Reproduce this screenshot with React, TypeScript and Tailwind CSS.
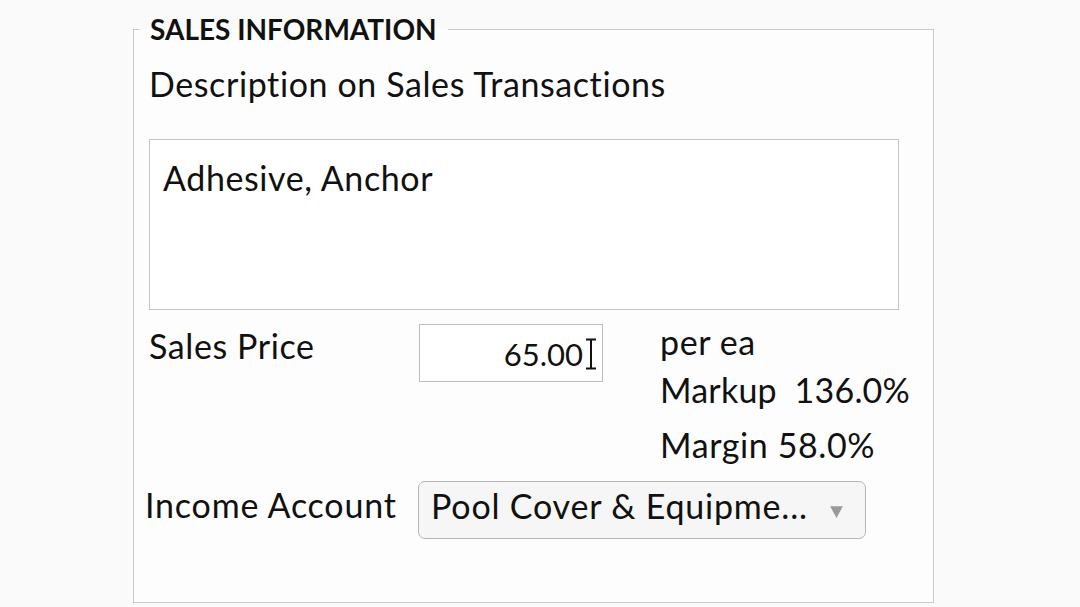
import React from "react";

export default function App() {
  return (
    <div
      className="w-[1080px] h-[607px] bg-[#fafafa] overflow-hidden text-[#111]"
      style={{ fontFamily: "Lato, 'Noto Sans', sans-serif" }}
    >
      <div className="pl-[133px] pt-[12px]">
        <fieldset className="w-[801px] min-w-0 h-[591px] border border-[#c9c9c9] bg-[#fdfdfd] pl-[15px] pr-[34px]">
          <legend className="-ml-[10px] px-[11px] pt-[2px] pb-[3px] text-[28px] leading-[30px] font-bold text-[#111]">
            SALES INFORMATION
          </legend>
          <div className="mt-[17px] text-[34px] leading-[40px] tracking-[0.6px]">
            Description on Sales Transactions
          </div>
          <div className="mt-[35px] w-[750px] h-[171px] border border-[#c6c6c6] bg-white px-[13px] pt-[18px] text-[34px] leading-[40px] tracking-[0.6px]">
            Adhesive, Anchor
          </div>
          <div className="mt-[14px] flex items-start text-[34px] leading-[40px] tracking-[0.6px]">
            <div className="w-[270px] shrink-0 pt-[2px]">Sales Price</div>
            <div className="w-[184px] shrink-0 h-[58px] border border-[#bdbdbd] bg-white flex items-center justify-end pr-[5px]">
              <span className="mt-[1px] text-[31px] tracking-[0px]">65.00</span>
              <svg width="12" height="32" viewBox="0 0 12 32" className="ml-[2px] mt-[2px]">
                <path d="M1 1.5 H11 M6 1.5 V30.5 M1 30.5 H11" stroke="#111" strokeWidth="2" fill="none" />
              </svg>
            </div>
            <div className="ml-[57px] -mt-[2px] whitespace-nowrap">
              <div>per ea</div>
              <div className="mt-[8px] tracking-[0.2px]">Markup&nbsp;&nbsp;136.0%</div>
              <div className="mt-[15px]">Margin 58.0%</div>
            </div>
          </div>
          <div className="mt-[16px] flex items-start -ml-[4px] text-[34px] leading-[40px] tracking-[0.8px]">
            <div className="w-[273px] shrink-0 pt-[4px] whitespace-nowrap">Income Account</div>
            <div className="w-[448px] shrink-0 h-[58px] rounded-[7px] border border-[#b5b5b5] bg-[#f6f6f6] flex items-start pl-[12px] pr-[21px] pt-[4px]">
              <span className="flex-1 whitespace-nowrap">Pool Cover &amp; Equipme...</span>
              <svg width="15" height="15" viewBox="0 0 14 14" className="mt-[18px]">
                <polygon points="1,2 13,2 7,13" fill="#9a9a9a" />
              </svg>
            </div>
          </div>
        </fieldset>
      </div>
    </div>
  );
}
